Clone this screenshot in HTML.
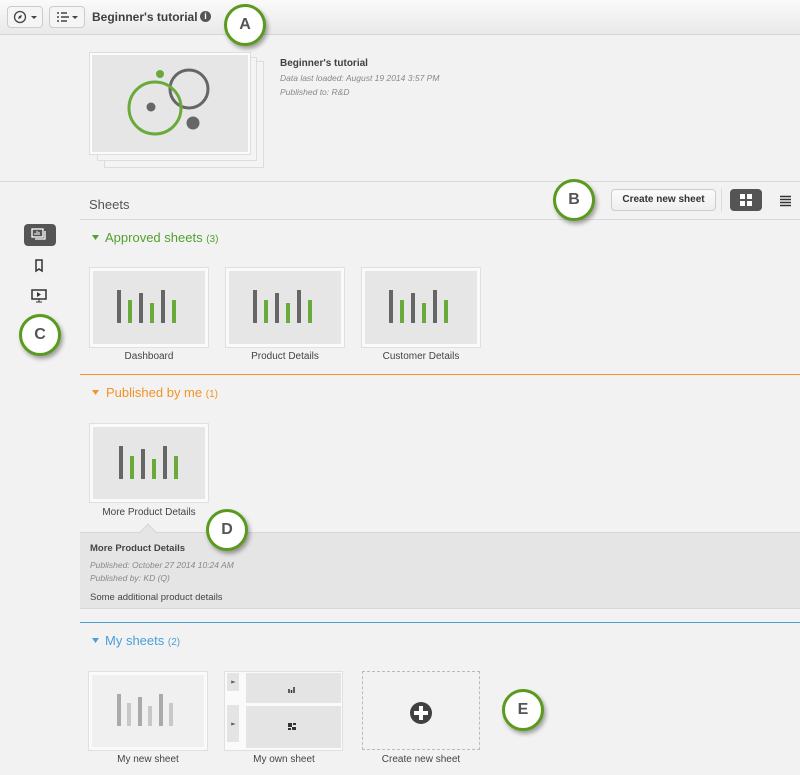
<!DOCTYPE html>
<html><head><meta charset="utf-8"><style>
*{margin:0;padding:0;box-sizing:border-box}
body{width:800px;height:775px;background:#f2f2f2;font-family:"Liberation Sans",sans-serif;position:relative;overflow:hidden;color:#404040}
.a{position:absolute}
.circ{position:absolute;width:42px;height:42px;border-radius:50%;border:3px solid #5a9a1e;background:#fff;font:bold 16px "Liberation Sans",sans-serif;color:#555;text-align:center;line-height:36px;box-shadow:2px 3px 4px rgba(0,0,0,.35)}
.card{position:absolute;background:#e6e6e6;border:3px solid #fafafa;outline:1px solid #e0e0e0}
.lbl{position:absolute;font-size:10px;color:#444;text-align:center;width:140px}
.it{font-style:italic;font-size:8.5px;color:#888}
</style></head><body>
<!-- toolbar -->
<div class="a" style="left:0;top:0;width:800px;height:35px;background:linear-gradient(#fafafa,#e9e9e9);border-bottom:1px solid #d5d5d5"></div>
<div class="a" style="left:7px;top:6px;width:36px;height:22px;border:1px solid #ccc;border-radius:4px;background:#f5f5f5"></div>
<svg class="a" style="left:13px;top:10px" width="28" height="14"><circle cx="7" cy="7" r="5.5" fill="none" stroke="#444" stroke-width="1.3"/><path d="M5 9 L6 6 L9 5 L8 8Z" fill="#444"/><path d="M18 6h6l-3 3z" fill="#444"/></svg>
<div class="a" style="left:49px;top:6px;width:36px;height:22px;border:1px solid #ccc;border-radius:4px;background:#f5f5f5"></div>
<svg class="a" style="left:56px;top:10px" width="28" height="14"><path d="M1 3h2M5 3h6M1 7h2M5 7h8M1 11h2M5 11h6" stroke="#444" stroke-width="1.4"/><path d="M16 6h6l-3 3z" fill="#444"/></svg>
<div class="a" style="left:92px;top:10px;font-size:12px;font-weight:bold;color:#404040">Beginner's tutorial</div>
<div class="a" style="left:200px;top:11px;width:11px;height:11px;border-radius:50%;background:#555;color:#fff;font-size:9px;font-weight:bold;text-align:center;line-height:11px">i</div>
<div class="circ" style="left:224px;top:4px">A</div>
<!-- app thumb -->
<div class="a" style="left:104px;top:61px;width:160px;height:107px;background:#f4f4f4;border:1px solid #ddd"></div>
<div class="a" style="left:97px;top:57px;width:160px;height:104px;background:#f4f4f4;border:1px solid #ddd"></div>
<div class="a" style="left:90px;top:53px;width:160px;height:101px;background:#e6e6e6;border:2px solid #fbfbfb;outline:1px solid #ddd"></div>
<svg class="a" style="left:90px;top:53px" width="160" height="100"><circle cx="99" cy="36" r="19" fill="none" stroke="#666" stroke-width="3"/><circle cx="65" cy="55" r="26" fill="none" stroke="#6aaa3a" stroke-width="3"/><circle cx="70" cy="21" r="4" fill="#6aaa3a"/><circle cx="61" cy="54" r="4.5" fill="#666"/><circle cx="103" cy="70" r="6.5" fill="#666"/></svg>
<div class="a" style="left:280px;top:58px;font-size:10px;font-weight:bold">Beginner's tutorial</div>
<div class="a it" style="left:280px;top:73px">Data last loaded: August 19 2014 3:57 PM</div>
<div class="a it" style="left:280px;top:87px">Published to: R&amp;D</div>
<div class="a" style="left:0;top:181px;width:800px;height:1px;background:#d8d8d8"></div>
<!-- sheets header -->
<div class="a" style="left:89px;top:197px;font-size:13px;color:#555">Sheets</div>
<div class="a" style="left:80px;top:219px;width:720px;height:1px;background:#d8d8d8"></div>
<div class="circ" style="left:553px;top:179px">B</div>
<div class="a" style="left:611px;top:189px;width:105px;height:22px;border:1px solid #ccc;border-radius:4px;background:linear-gradient(#fbfbfb,#efefef);font-size:10px;font-weight:bold;color:#333;text-align:center;line-height:20px">Create new sheet</div>
<div class="a" style="left:721px;top:188px;width:1px;height:24px;background:#ddd"></div>
<div class="a" style="left:730px;top:189px;width:32px;height:22px;border-radius:4px;background:#555"></div>
<svg class="a" style="left:739px;top:193px" width="14" height="14"><rect x="1" y="1" width="5" height="5" fill="#fff"/><rect x="8" y="1" width="5" height="5" fill="#fff"/><rect x="1" y="8" width="5" height="5" fill="#fff"/><rect x="8" y="8" width="5" height="5" fill="#fff"/></svg>
<svg class="a" style="left:779px;top:195px" width="13" height="12"><path d="M1 1.5h11M1 4.5h11M1 7.5h11M1 10.5h11" stroke="#333" stroke-width="1.5"/></svg>
<!-- left nav -->
<div class="a" style="left:24px;top:224px;width:32px;height:22px;border-radius:4px;background:#555"></div>
<svg class="a" style="left:31px;top:228px" width="18" height="14"><rect x="1" y="1" width="11" height="8" fill="none" stroke="#fff" stroke-width="1.3"/><path d="M14 3v8H4" fill="none" stroke="#fff" stroke-width="1.3"/><path d="M4 7V5M6 7V3M8 7V4" stroke="#fff"/></svg>
<svg class="a" style="left:34px;top:259px" width="10" height="14"><path d="M2 1h6v11l-3-2-3 2z" fill="none" stroke="#333" stroke-width="1.5"/></svg>
<svg class="a" style="left:31px;top:289px" width="16" height="14"><rect x="1" y="1" width="14" height="9" fill="none" stroke="#333" stroke-width="1.5"/><path d="M6 3l4 2.5-4 2.5z" fill="#333"/><path d="M8 10v3M5 13h6" stroke="#333"/></svg>
<div class="circ" style="left:19px;top:314px">C</div>
<!-- approved -->
<svg class="a" style="left:91px;top:234px" width="10" height="8"><path d="M1 1h7l-3.5 5z" fill="#52a22d"/></svg>
<div class="a" style="left:105px;top:230px;font-size:13px;color:#52a22d">Approved sheets <span style="font-size:10px">(3)</span></div>
<div class="card" style="left:90px;top:268px;width:118px;height:79px"></div>
<div class="card" style="left:226px;top:268px;width:118px;height:79px"></div>
<div class="card" style="left:362px;top:268px;width:118px;height:79px"></div>
<div class="card" style="left:90px;top:424px;width:118px;height:78px"></div>
<div class="lbl" style="left:79px;top:351px">Dashboard</div>
<div class="lbl" style="left:215px;top:351px">Product Details</div>
<div class="lbl" style="left:351px;top:351px">Customer Details</div>
<div class="a" style="left:80px;top:374px;width:720px;height:1px;background:#f39325"></div>
<!-- published -->
<svg class="a" style="left:91px;top:389px" width="10" height="8"><path d="M1 1h7l-3.5 5z" fill="#f39325"/></svg>
<div class="a" style="left:106px;top:385px;font-size:13px;color:#f39325">Published by me <span style="font-size:10px">(1)</span></div>
<div class="lbl" style="left:79px;top:507px">More Product Details</div>
<div class="a" style="left:80px;top:532px;width:720px;height:77px;background:#e5e5e5;border-top:1px solid #d6d6d6;border-bottom:1px solid #d6d6d6"></div>
<div class="a" style="left:142px;top:526px;width:12px;height:12px;background:#e5e5e5;transform:rotate(45deg);border-left:1px solid #d6d6d6;border-top:1px solid #d6d6d6"></div>
<div class="circ" style="left:206px;top:509px">D</div>
<div class="a" style="left:90px;top:543px;font-size:9.5px;font-weight:bold;color:#444">More Product Details</div>
<div class="a it" style="left:90px;top:560px">Published: October 27 2014 10:24 AM</div>
<div class="a it" style="left:90px;top:573px">Published by: KD (Q)</div>
<div class="a" style="left:90px;top:592px;font-size:9.5px;color:#444">Some additional product details</div>
<div class="a" style="left:80px;top:622px;width:720px;height:1px;background:#4aa0d8"></div>
<!-- my sheets -->
<svg class="a" style="left:91px;top:637px" width="10" height="8"><path d="M1 1h7l-3.5 5z" fill="#4aa0d8"/></svg>
<div class="a" style="left:105px;top:633px;font-size:13px;color:#4aa0d8">My sheets <span style="font-size:10px">(2)</span></div>
<div class="card" style="left:89px;top:672px;width:118px;height:78px;background:#f0f0f0"></div>
<div class="a" style="left:224px;top:671px;width:119px;height:80px;background:#fafafa;border:1px solid #e0e0e0"></div>
<div class="a" style="left:227px;top:673px;width:12px;height:18px;background:#e4e4e4"></div>
<div class="a" style="left:227px;top:705px;width:12px;height:37px;background:#e4e4e4"></div>
<div class="a" style="left:246px;top:673px;width:95px;height:30px;background:#e4e4e4"></div>
<div class="a" style="left:246px;top:706px;width:95px;height:42px;background:#e4e4e4"></div>
<svg class="a" style="left:0;top:0" width="800" height="775">
<g id="b1"><rect x="117" y="290" width="4" height="33" fill="#666"/><rect x="128" y="300" width="4" height="23" fill="#6aaa3a"/><rect x="139" y="293" width="4" height="30" fill="#666"/><rect x="150" y="303" width="4" height="20" fill="#6aaa3a"/><rect x="161" y="290" width="4" height="33" fill="#666"/><rect x="172" y="300" width="4" height="23" fill="#6aaa3a"/></g>
<use href="#b1" x="136"/><use href="#b1" x="272"/><use href="#b1" x="2" y="156"/>
<g fill="#aaa"><rect x="117" y="694" width="4" height="32"/><rect x="138" y="697" width="4" height="29"/><rect x="159" y="694" width="4" height="32"/></g>
<g fill="#c8c8c8"><rect x="127" y="703" width="4" height="23"/><rect x="148" y="706" width="4" height="20"/><rect x="169" y="703" width="4" height="23"/></g>
<path d="M289 693v-4M291.5 693v-3M294 693v-6" stroke="#333" stroke-width="1.5"/><rect x="288" y="723" width="4" height="4" fill="#333"/><rect x="293" y="723" width="3" height="2" fill="#333"/><rect x="288" y="728" width="3" height="2" fill="#333"/><rect x="292" y="727" width="4" height="3" fill="#333"/><path d="M231 681l3 1-3 1M231 723l3 1-3 1" stroke="#555" fill="none"/></svg>
<div class="a" style="left:362px;top:671px;width:118px;height:79px;border:1px dashed #bbb"></div>
<div class="a" style="left:410px;top:702px;width:22px;height:22px;border-radius:50%;background:#404040"></div>
<div class="a" style="left:419px;top:706px;width:4px;height:14px;background:#fff"></div>
<div class="a" style="left:414px;top:711px;width:14px;height:4px;background:#fff"></div>
<div class="circ" style="left:502px;top:689px">E</div>
<div class="lbl" style="left:78px;top:754px">My new sheet</div>
<div class="lbl" style="left:214px;top:754px">My own sheet</div>
<div class="lbl" style="left:351px;top:754px">Create new sheet</div>
</body></html>
